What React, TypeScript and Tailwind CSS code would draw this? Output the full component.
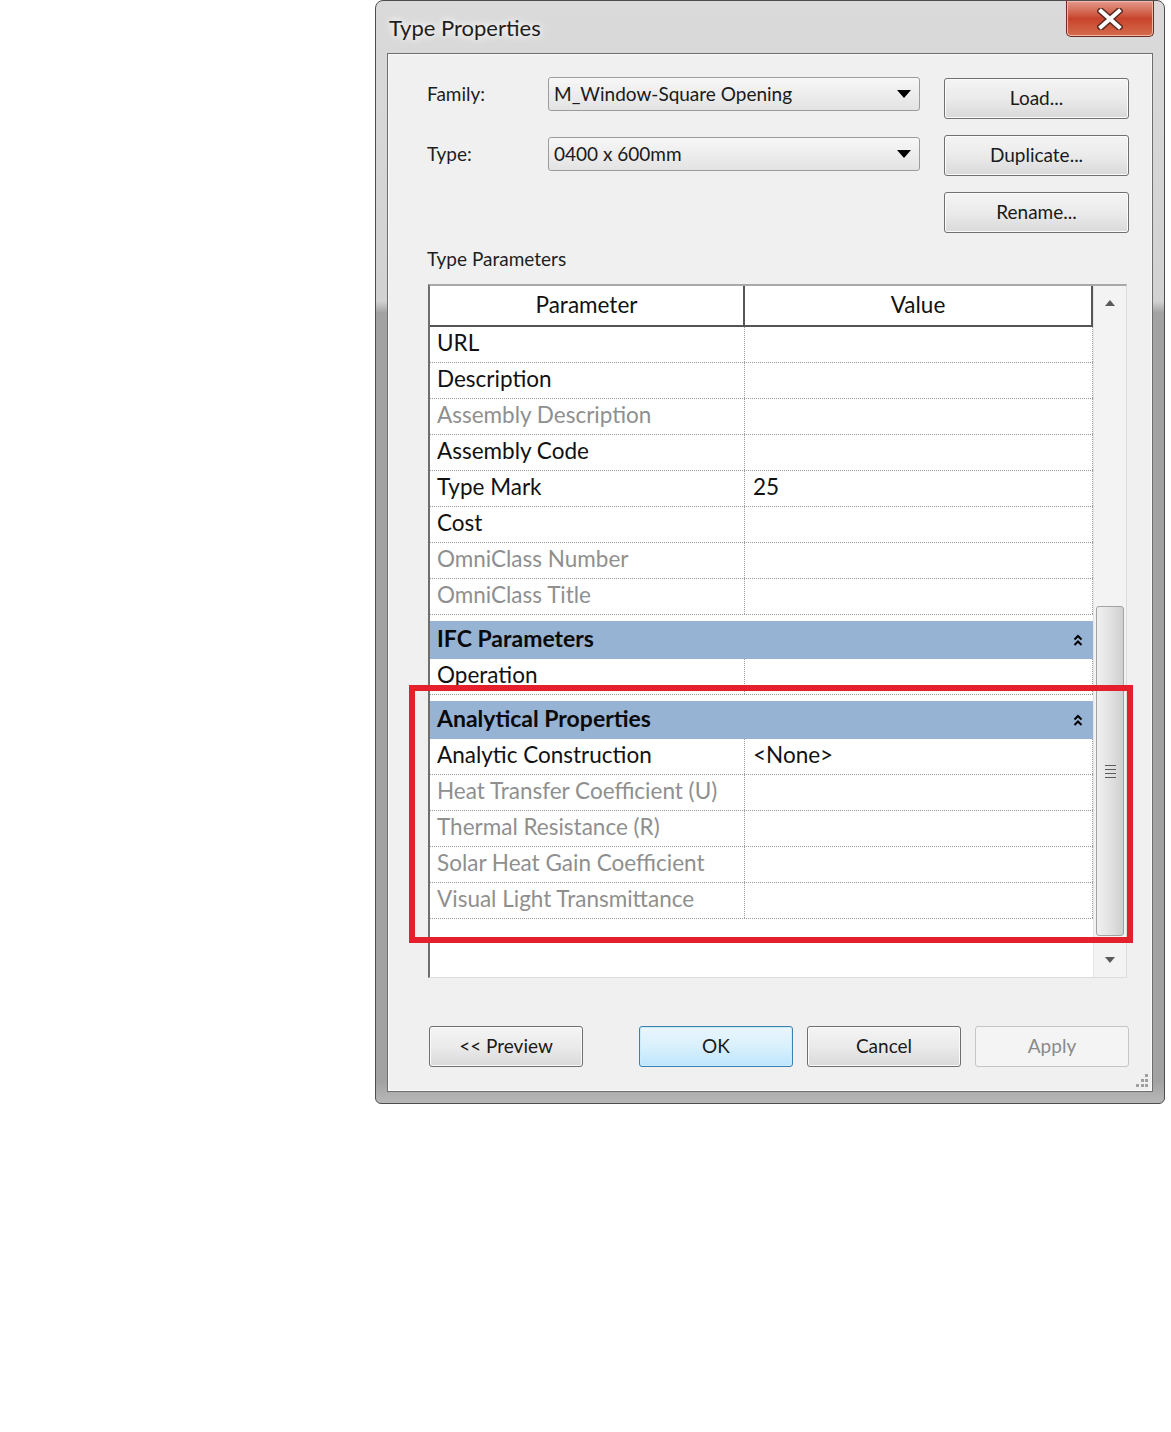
import React from 'react';

type Row = { name: string; value?: string; muted?: boolean };

const IDENTITY_ROWS: Row[] = [
  { name: 'URL' },
  { name: 'Description' },
  { name: 'Assembly Description', muted: true },
  { name: 'Assembly Code' },
  { name: 'Type Mark', value: '25' },
  { name: 'Cost' },
  { name: 'OmniClass Number', muted: true },
  { name: 'OmniClass Title', muted: true },
];

const IFC_ROWS: Row[] = [{ name: 'Operation' }];

const ANALYTICAL_ROWS: Row[] = [
  { name: 'Analytic Construction', value: '<None>' },
  { name: 'Heat Transfer Coefficient (U)', muted: true },
  { name: 'Thermal Resistance (R)', muted: true },
  { name: 'Solar Heat Gain Coefficient', muted: true },
  { name: 'Visual Light Transmittance', muted: true },
];

const FONT = { fontFamily: 'Lato, "Open Sans", "Liberation Sans", sans-serif' };

function DropTriangle() {
  return (
    <svg width="14" height="8" viewBox="0 0 14 8">
      <path d="M0 0 H14 L7 8 Z" fill="#000" />
    </svg>
  );
}

function Combo({ text }: { text: string }) {
  return (
    <div className="flex h-[34px] w-[372px] items-center justify-between rounded-[3px] border border-[#9c9c9c] bg-gradient-to-b from-[#f7f7f7] to-[#e3e3e3] pl-[5px] pr-[8px] text-[19px] text-[#1a1a1a]">
      <span>{text}</span>
      <DropTriangle />
    </div>
  );
}

function WinButton({
  label,
  kind = 'normal',
  className = '',
}: {
  label: string;
  kind?: 'normal' | 'default' | 'disabled';
  className?: string;
}) {
  const look =
    kind === 'default'
      ? 'border-[#3c7fb1] bg-gradient-to-b from-[#eaf6fd] via-[#d9f0fc] to-[#bee6fd] text-[#1a1a1a] shadow-[inset_0_0_0_1px_#c8ecfc]'
      : kind === 'disabled'
      ? 'border-[#c3c6c9] bg-[#f4f4f4] text-[#8a8a8a]'
      : 'border-[#707070] bg-gradient-to-b from-[#f4f4f4] via-[#ebebeb] to-[#d9d9d9] text-[#1a1a1a] shadow-[inset_0_0_0_1px_#fbfbfb]';
  return (
    <div
      className={`flex h-[41px] w-[154px] items-center justify-center rounded-[3px] border text-[19px] ${look} ${className}`}
    >
      {label}
    </div>
  );
}

function Chevrons() {
  return (
    <svg width="10" height="13" viewBox="0 0 10 13">
      <path d="M1.5 5.5 L5 2 L8.5 5.5 M1.5 11 L5 7.5 L8.5 11" stroke="#000" strokeWidth="2" fill="none" />
    </svg>
  );
}

function DataRow({ row }: { row: Row }) {
  return (
    <div className="flex h-[36px] border-b border-dotted border-[#9a9a9a] text-[22.5px]">
      <div
        className={`flex w-[315px] items-center border-r border-dotted border-[#9a9a9a] pb-[3px] pl-[7px] ${
          row.muted ? 'text-[#8f8f8f]' : 'text-[#111]'
        }`}
      >
        {row.name}
      </div>
      <div className="flex flex-1 items-center border-r border-dotted border-[#9a9a9a] pb-[3px] pl-[8px] text-[#111]">
        {row.value}
      </div>
    </div>
  );
}

function Category({ title }: { title: string }) {
  return (
    <div className="pt-[6px]">
      <div className="flex h-[38px] items-center justify-between bg-[#97b3d4] pl-[7px] pr-[10px] text-[23px] font-bold text-[#0a0a0a]">
        <span className="pb-[3px]">{title}</span>
        <Chevrons />
      </div>
    </div>
  );
}

function ScrollBar() {
  return (
    <div className="flex w-[33px] flex-col border-l border-[#e4e4e4] bg-[#f3f3f3]">
      <div className="flex h-[34px] items-center justify-center">
        <svg width="10" height="6" viewBox="0 0 10 6">
          <path d="M0 6 L5 0 L10 6 Z" fill="#5a5a5a" />
        </svg>
      </div>
      <div className="h-[286px]" />
      <div className="mx-[2px] flex h-[330px] items-center justify-center rounded-[3px] border border-[#a3a3a3] bg-gradient-to-r from-[#f0f0f0] via-[#e2e2e2] to-[#cfcfcf]">
        <div className="flex flex-col gap-[3px]">
          <div className="h-[1px] w-[11px] bg-[#5c5c5c]" />
          <div className="h-[1px] w-[11px] bg-[#5c5c5c]" />
          <div className="h-[1px] w-[11px] bg-[#5c5c5c]" />
          <div className="h-[1px] w-[11px] bg-[#5c5c5c]" />
        </div>
      </div>
      <div className="h-[8px]" />
      <div className="flex h-[32px] items-center justify-center">
        <svg width="10" height="6" viewBox="0 0 10 6">
          <path d="M0 0 L10 0 L5 6 Z" fill="#5a5a5a" />
        </svg>
      </div>
    </div>
  );
}

function CloseButton() {
  return (
    <div className="flex h-[36px] w-[88px] items-center justify-center rounded-b-[5px] border border-t-0 border-[#6b2b22] bg-gradient-to-b from-[#e39a8c] via-[#c8432c] to-[#d56b4c] shadow-[inset_0_0_0_1px_#f0b7a8]">
      <svg width="26" height="22" viewBox="0 0 26 22">
        <path d="M4 3 L22 19 M22 3 L4 19" stroke="#5a2a22" strokeWidth="7" strokeLinecap="square" />
        <path d="M4 3 L22 19 M22 3 L4 19" stroke="#fff" strokeWidth="4" strokeLinecap="square" />
      </svg>
    </div>
  );
}

export default function App() {
  return (
    <div className="relative h-[1432px] w-full bg-white" style={FONT}>
      <div className="ml-[375px] flex h-[1104px] w-[790px] flex-col rounded-b-[6px] rounded-t-[8px] border border-[#4d4d4d] bg-[linear-gradient(to_bottom,#dadada_0px,#d2d2d2_300px,#a2a2a2_312px,#a2a2a2_1080px,#b8b8b8_100%)]">
        {/* title bar */}
        <div className="flex h-[52px] items-start justify-between">
          <div className="pl-[13px] pt-[10px] text-[22px] text-[#1e1e1e] [text-shadow:0_0_12px_#ffffff,0_0_6px_#ffffff]">
            Type Properties
          </div>
          <div className="mr-[10px]">
            <CloseButton />
          </div>
        </div>

        {/* client panel */}
        <div className="relative mx-[11px] mb-[11px] flex-1 border border-[#6e6e6e] bg-[#f0f0f0] shadow-[inset_0_0_0_1px_#fafafa]">
          <div className="flex pl-[39px] pt-[23px]">
            <div className="flex flex-col gap-[26px]">
              <div className="flex items-center">
                <span className="w-[121px] text-[19px] text-[#1e1e1e]">Family:</span>
                <Combo text="M_Window-Square Opening" />
              </div>
              <div className="flex items-center">
                <span className="w-[121px] text-[19px] text-[#1e1e1e]">Type:</span>
                <Combo text="0400 x 600mm" />
              </div>
            </div>
            <div className="ml-[24px] mt-[1px] flex w-[185px] flex-col gap-[16px]">
              <WinButton label="Load..." className="w-[185px]" />
              <WinButton label="Duplicate..." className="w-[185px]" />
              <WinButton label="Rename..." className="w-[185px]" />
            </div>
          </div>

          <div className="mt-[14px] pl-[39px] text-[19px] leading-[24px] text-[#1e1e1e]">Type Parameters</div>

          {/* parameter grid */}
          <div className="ml-[40px] mt-[13px] flex h-[694px] w-[699px] border-b border-l-2 border-r border-t-2 border-b-[#dcdcdc] border-l-[#6e6e6e] border-r-[#dcdcdc] border-t-[#a8a8a8] bg-white">
            <div className="flex w-[664px] flex-col">
              <div className="flex h-[41px] border-b-2 border-[#555] text-[22.5px] text-[#111]">
                <div className="flex w-[315px] items-center justify-center border-r-2 border-[#555] pb-[2px]">Parameter</div>
                <div className="flex flex-1 items-center justify-center border-r-2 border-[#555] pb-[2px]">Value</div>
              </div>
              {IDENTITY_ROWS.map((r) => (
                <DataRow key={r.name} row={r} />
              ))}
              <Category title="IFC Parameters" />
              {IFC_ROWS.map((r) => (
                <DataRow key={r.name} row={r} />
              ))}
              <Category title="Analytical Properties" />
              {ANALYTICAL_ROWS.map((r) => (
                <DataRow key={r.name} row={r} />
              ))}
            </div>
            <ScrollBar />
          </div>

          {/* dialog buttons */}
          <div className="mt-[48px] flex pl-[41px]">
            <WinButton label="<< Preview" />
            <WinButton label="OK" kind="default" className="ml-[56px]" />
            <WinButton label="Cancel" className="ml-[14px]" />
            <WinButton label="Apply" kind="disabled" className="ml-[14px]" />
          </div>

          {/* size grip */}
          <svg className="absolute bottom-[3px] right-[3px]" width="16" height="16" viewBox="0 0 16 16">
            {[
              [12, 2],
              [8, 7],
              [12, 7],
              [3, 12],
              [8, 12],
              [12, 12],
            ].map(([x, y]) => (
              <rect key={`${x}-${y}`} x={x} y={y} width="3" height="3" fill="#a0a0a0" />
            ))}
          </svg>
        </div>
      </div>

      {/* red highlight annotation */}
      <div className="absolute left-[409px] top-[685px] h-[258px] w-[724px] border-[6px] border-[#e3202b]" />
    </div>
  );
}
